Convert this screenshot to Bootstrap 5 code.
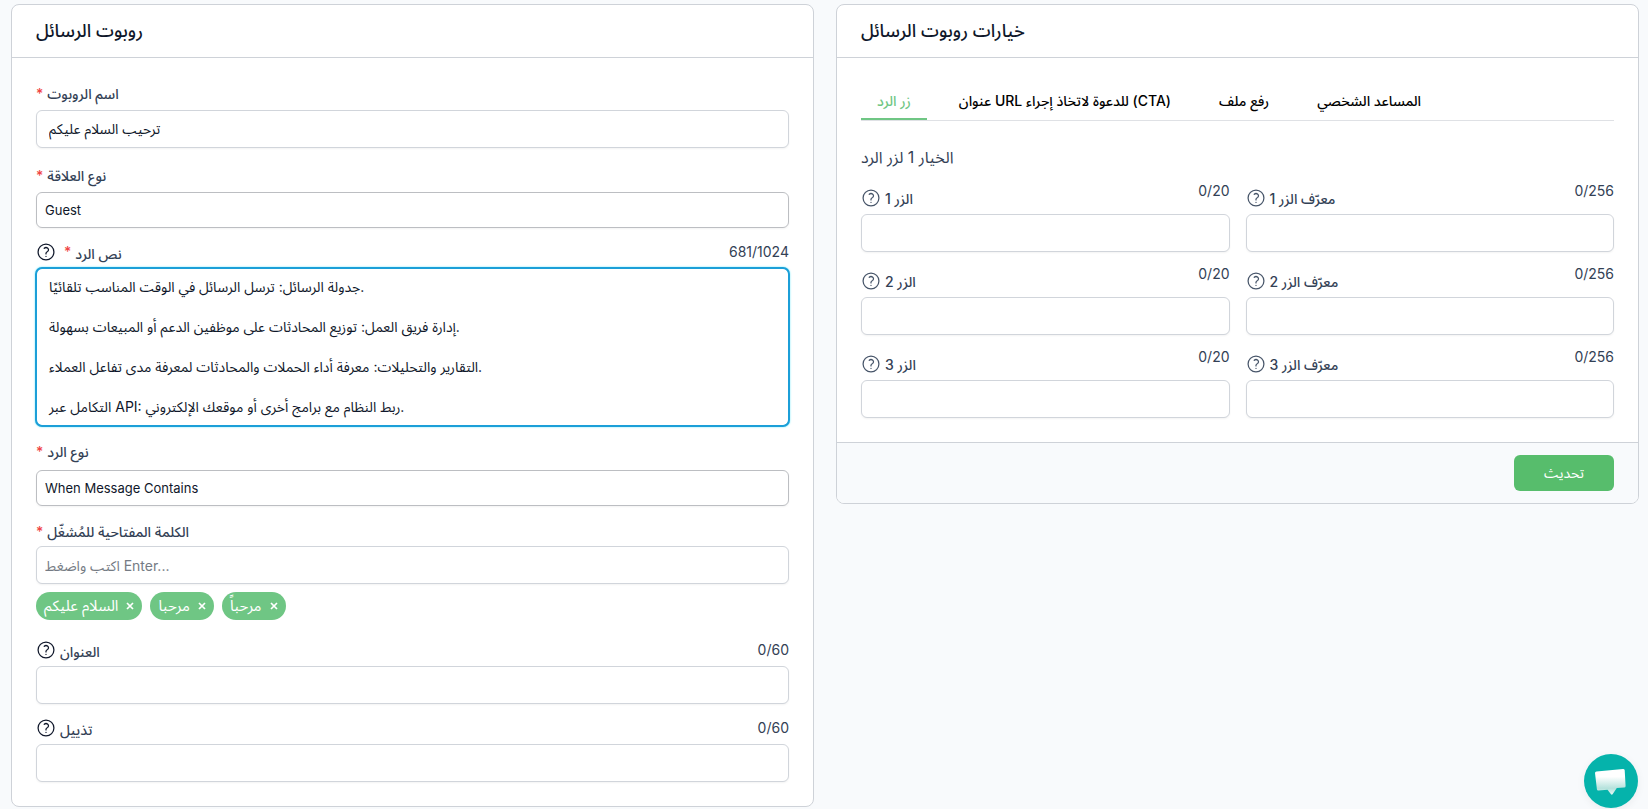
<!DOCTYPE html>
<html lang="ar">
<head>
<meta charset="utf-8">
<meta name="viewport" content="width=device-width, initial-scale=1">
<title>روبوت الرسائل</title>
<link rel="stylesheet" href="https://cdn.jsdelivr.net/npm/bootstrap@5.3.0/dist/css/bootstrap.min.css">
<style>
  body { font-family: Inter, "Noto Sans Arabic", "DejaVu Sans", sans-serif; font-size: 14px; line-height: 20px; color: #334155; background: #f8fafc; }
  .page-grid { display: grid; grid-template-columns: 1fr 1fr; gap: 22px; align-items: start; padding: 4px 9px 4px 11px; }
  .panel { border: 1px solid #ced2d8; border-radius: 8px; background: #fff; overflow: hidden; }
  .panel-head { padding: 14px 24px; border-bottom: 1px solid #ced2d8; }
  .panel-head h1 { font-size: 18px; line-height: 24px; font-weight: 500; color: #0f172a; margin: 0; }
  .panel-main { padding: 26px 24px 24px; }
  .tabs-main { padding: 24px; }
  .panel-foot { padding: 12px 24px; border-top: 1px solid #ced2d8; background: #f8fafc; }
  .field-label { font-size: 14px; line-height: 20px; font-weight: 500; color: #334155; }
  .star { color: #ef4444; font-weight: 500; margin-right: 4px; }
  .tip { width: 20px; height: 20px; flex: none; color: #0f172a; }
  .tip-soft { color: #475569; }
  .counter { font-size: 14px; line-height: 20px; }
  .star-row { margin-bottom: 6px; }
  .star-row-next { margin-top: 18px; }
  .label-row { height: 24px; margin: 12px 0 4px; }
  .chips + .label-row { margin-top: 18px; }
  .label-row .field-label, .slot-row .field-label { padding-top: 3px; }
  .slot-row { height: 28px; margin-bottom: 5px; }
  .form-control, .form-select { font-size: 14px; line-height: 20px; color: #0f172a; border: 1px solid #d1d5db; border-radius: 6px; padding: 8px 12px; box-shadow: 0 1px 2px rgba(0,0,0,.05); }
  .form-control { height: 38px; }
  .form-select { height: 36px; font-size: 13px; padding: 7px 8px; background-image: none; border-color: #bcbec2; }
  .form-control.keywords { padding-left: 8px; }
  .form-control.keywords::placeholder { color: #757b84; }
  textarea.form-control, textarea.form-control:focus { height: 158px; resize: none; overflow: hidden; border-color: #1c9fd8; box-shadow: 0 0 0 1px #1c9fd8, 0 0 2px 1px #67e8f9; }
  .chip { height: 28px; border-radius: 14px; background: #6fc684; color: #fff; padding: 0 8px; font-size: 15px; }
  .chip button { border: 0; background: none; color: #fff; padding: 0; width: 8px; display: flex; }
  .tab-bar { height: 39px; border-bottom: 1px solid #dfe1e5; gap: 16px; }
  .tab-bar .nav-link { font-size: 14px; line-height: 20px; font-weight: 500; color: #000; padding: 9px 16px 8px; border-bottom: 2px solid transparent; }
  .tab-bar .nav-link.active { color: #6fc684; border-color: #6fc684; }
  .option-title { font-size: 16px; line-height: 24px; font-weight: 400; margin: 24px 0 12px; }
  .slots { display: grid; grid-template-columns: 1fr 1fr; gap: 12px 16px; }
  .btn-save { width: 100px; height: 36px; font-size: 14px; line-height: 20px; color: #fff; background: #57bd6c; border: 0; border-radius: 6px; }
  .chat-btn { position: fixed; right: 10px; bottom: 1px; width: 54px; height: 54px; border: 0; border-radius: 50%; padding: 0; background: #05b3ab; box-shadow: 0 2px 8px rgba(0,0,0,.06); }
</style>
</head>
<body>
<svg width="0" height="0" class="position-absolute" aria-hidden="true">
  <symbol id="help" viewBox="0 0 24 24" fill="none" stroke="currentColor" stroke-width="1.5" stroke-linecap="round" stroke-linejoin="round">
    <path d="M9.879 7.519c1.171-1.025 3.071-1.025 4.242 0 1.172 1.025 1.172 2.687 0 3.712-.203.179-.43.326-.67.442-.745.361-1.45.999-1.45 1.827v.75M21.500 12a9.500 9.500 0 1 1-19 0 9.500 9.500 0 0 1 19 0Zm-9.500 5.250h.008v.008H12v-.008Z"/>
  </symbol>
  <symbol id="cross" viewBox="0 0 8 8"><path d="M1 1l6 6M7 1L1 7" stroke="currentColor" stroke-width="1.7"/></symbol>
</svg>
<main class="page-grid">
  <section class="panel">
    <header class="panel-head"><h1>روبوت الرسائل</h1></header>
    <div class="panel-main">
      <div class="star-row d-flex"><span class="star">*</span><label class="field-label" for="botName">اسم الروبوت</label></div>
      <input id="botName" class="form-control" type="text" value="ترحيب السلام عليكم">

      <div class="star-row star-row-next d-flex"><span class="star">*</span><label class="field-label" for="relation">نوع العلاقة</label></div>
      <select id="relation" class="form-select"><option>Guest</option></select>

      <div class="label-row d-flex align-items-center justify-content-between">
        <div class="d-flex align-items-center"><svg class="tip me-2"><use href="#help"/></svg><span class="star">*</span><label class="field-label" for="reply">نص الرد</label></div>
        <span class="counter">681/1024</span>
      </div>
      <textarea id="reply" class="form-control">جدولة الرسائل: ترسل الرسائل في الوقت المناسب تلقائيًا.

إدارة فريق العمل: توزيع المحادثات على موظفين الدعم أو المبيعات بسهولة.

التقارير والتحليلات: معرفة أداء الحملات والمحادثات لمعرفة مدى تفاعل العملاء.

التكامل عبر API: ربط النظام مع برامج أخرى أو موقعك الإلكتروني.</textarea>

      <div class="d-flex mb-2 mt-3"><span class="star">*</span><label class="field-label" for="replyType">نوع الرد</label></div>
      <select id="replyType" class="form-select"><option>When Message Contains</option></select>

      <div class="d-flex mb-1 mt-3"><span class="star">*</span><label class="field-label" for="trigger">الكلمة المفتاحية للمُشغّل</label></div>
      <input id="trigger" class="form-control keywords" type="text" placeholder="اكتب واضغط Enter...">
      <div class="chips d-flex gap-2 mt-2">
        <span class="chip d-inline-flex align-items-center gap-2">السلام عليكم<button type="button" aria-label="×"><svg width="8" height="8"><use href="#cross"/></svg></button></span>
        <span class="chip d-inline-flex align-items-center gap-2">مرحبا<button type="button" aria-label="×"><svg width="8" height="8"><use href="#cross"/></svg></button></span>
        <span class="chip d-inline-flex align-items-center gap-2">مرحباً<button type="button" aria-label="×"><svg width="8" height="8"><use href="#cross"/></svg></button></span>
      </div>

      <div class="label-row d-flex align-items-center justify-content-between">
        <div class="d-flex align-items-center gap-1"><svg class="tip"><use href="#help"/></svg><label class="field-label" for="title">العنوان</label></div>
        <span class="counter">0/60</span>
      </div>
      <input id="title" class="form-control" type="text">

      <div class="label-row d-flex align-items-center justify-content-between">
        <div class="d-flex align-items-center gap-1"><svg class="tip"><use href="#help"/></svg><label class="field-label" for="footer">تذييل</label></div>
        <span class="counter">0/60</span>
      </div>
      <input id="footer" class="form-control" type="text">
    </div>
  </section>

  <section class="panel">
    <header class="panel-head"><h1>خيارات روبوت الرسائل</h1></header>
    <div class="tabs-main">
      <nav class="tab-bar nav flex-nowrap">
        <a class="nav-link active" href="#">زر الرد</a>
        <a class="nav-link" href="#">عنوان URL للدعوة لاتخاذ إجراء (CTA)</a>
        <a class="nav-link" href="#">رفع ملف</a>
        <a class="nav-link" href="#">المساعد الشخصي</a>
      </nav>
      <h2 class="option-title">الخيار 1 لزر الرد</h2>
      <div class="slots">
        <div>
          <div class="slot-row d-flex justify-content-between"><div class="d-flex align-items-center align-self-end gap-1"><svg class="tip tip-soft"><use href="#help"/></svg><label class="field-label" for="b1">الزر 1</label></div><span class="counter">0/20</span></div>
          <input id="b1" class="form-control" type="text">
        </div>
        <div>
          <div class="slot-row d-flex justify-content-between"><div class="d-flex align-items-center align-self-end gap-1"><svg class="tip tip-soft"><use href="#help"/></svg><label class="field-label" for="i1">معرّف الزر 1</label></div><span class="counter">0/256</span></div>
          <input id="i1" class="form-control" type="text">
        </div>
        <div>
          <div class="slot-row d-flex justify-content-between"><div class="d-flex align-items-center align-self-end gap-1"><svg class="tip tip-soft"><use href="#help"/></svg><label class="field-label" for="b2">الزر 2</label></div><span class="counter">0/20</span></div>
          <input id="b2" class="form-control" type="text">
        </div>
        <div>
          <div class="slot-row d-flex justify-content-between"><div class="d-flex align-items-center align-self-end gap-1"><svg class="tip tip-soft"><use href="#help"/></svg><label class="field-label" for="i2">معرّف الزر 2</label></div><span class="counter">0/256</span></div>
          <input id="i2" class="form-control" type="text">
        </div>
        <div>
          <div class="slot-row d-flex justify-content-between"><div class="d-flex align-items-center align-self-end gap-1"><svg class="tip tip-soft"><use href="#help"/></svg><label class="field-label" for="b3">الزر 3</label></div><span class="counter">0/20</span></div>
          <input id="b3" class="form-control" type="text">
        </div>
        <div>
          <div class="slot-row d-flex justify-content-between"><div class="d-flex align-items-center align-self-end gap-1"><svg class="tip tip-soft"><use href="#help"/></svg><label class="field-label" for="i3">معرّف الزر 3</label></div><span class="counter">0/256</span></div>
          <input id="i3" class="form-control" type="text">
        </div>
      </div>
    </div>
    <footer class="panel-foot d-flex justify-content-end"><button type="button" class="btn-save">تحديث</button></footer>
  </section>
</main>
<button type="button" class="chat-btn" aria-label="Chat">
  <svg width="54" height="54" viewBox="0 0 54 54">
    <defs><linearGradient id="bubble" x1="0" y1="0" x2="0" y2="1"><stop offset="0" stop-color="#fff"/><stop offset=".3" stop-color="#fff"/><stop offset=".75" stop-color="#b5e2dc"/><stop offset="1" stop-color="#e8f7f5"/></linearGradient></defs>
    <path d="M12.500 17.500 39 15q1.500 0 1.700 1.300L41.600 32q0 1.500-1.400 1.600l-7.400.5-4.200 6.200q-.8.900-1.600 0l-3.500-4.600-9 .8q-1.500.1-1.600-1.300L11 19q0-1.300 1.500-1.500Z" fill="url(#bubble)"/>
  </svg>
</button>
<script src="https://cdn.jsdelivr.net/npm/bootstrap@5.3.0/dist/js/bootstrap.bundle.min.js"></script>
</body>
</html>
